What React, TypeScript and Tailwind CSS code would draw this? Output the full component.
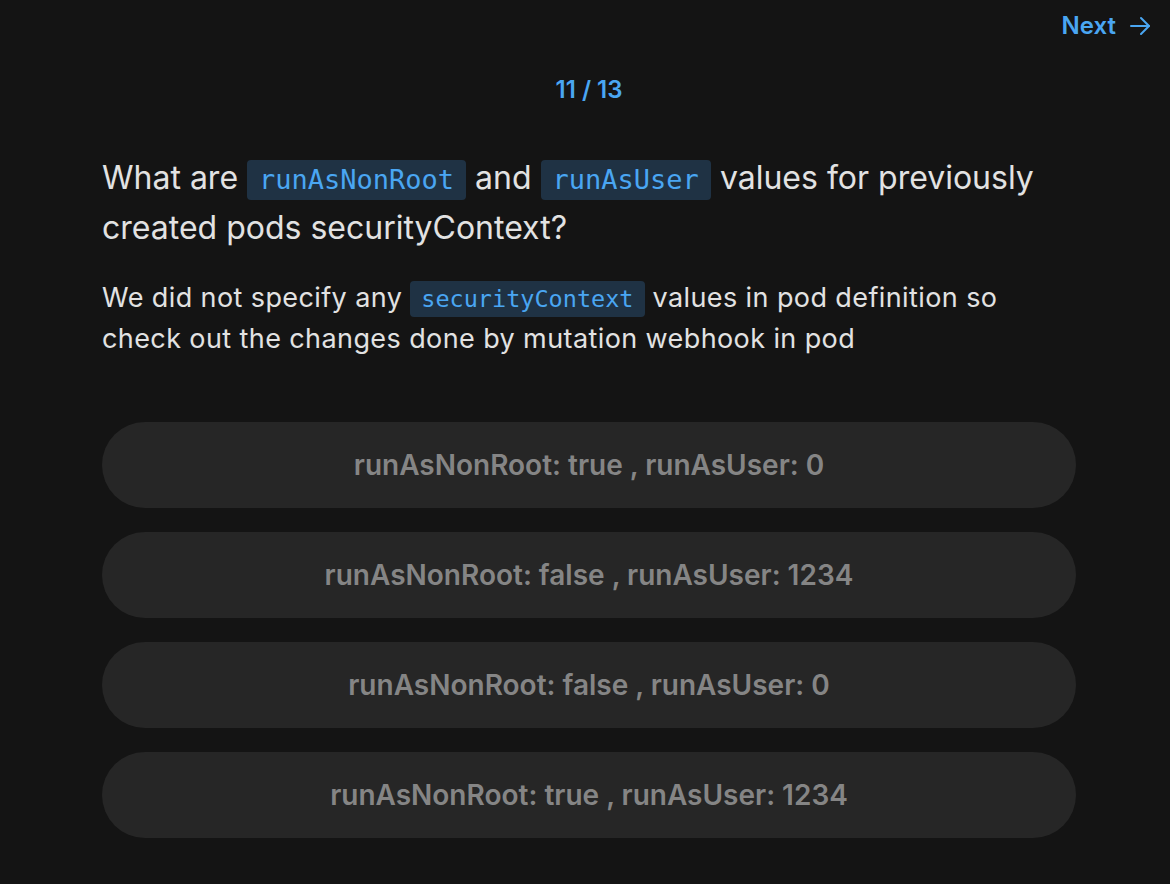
import React from "react";

const Code = ({ children, size }: { children: React.ReactNode; size: "lg" | "md" }) => (
  <code
    className={
      size === "lg"
        ? "inline-block rounded-[4px] bg-[#1f3244] px-[12px] leading-[40px] text-[27px] tracking-normal text-[#4aa6f2] align-baseline"
        : "inline-block rounded-[4px] bg-[#1f3244] px-[11px] leading-[36px] text-[23.5px] tracking-normal text-[#4aa6f2] align-baseline"
    }
    style={{ fontFamily: '"DejaVu Sans Mono", monospace' }}
  >
    {children}
  </code>
);

const options = [
  "runAsNonRoot: true , runAsUser: 0",
  "runAsNonRoot: false , runAsUser: 1234",
  "runAsNonRoot: false , runAsUser: 0",
  "runAsNonRoot: true , runAsUser: 1234",
];

export default function App() {
  return (
    <div
      className="min-h-[884px] w-full bg-[#141414] text-[#e2e2e2]"
      style={{ fontFamily: 'Inter, "Noto Sans", sans-serif' }}
    >
      <div className="flex justify-end pr-[18px] pt-[12px]">
        <button className="flex items-center gap-[12px] text-[24px] font-semibold text-[#4aa6f2] leading-[28px]">
          <span>Next</span>
          <svg width="24" height="24" viewBox="0 0 24 24" fill="none" stroke="currentColor" strokeWidth="2" strokeLinecap="round" strokeLinejoin="round">
            <path d="M3 12h18" />
            <path d="M13 4l8 8-8 8" />
          </svg>
        </button>
      </div>
      <div className="ml-[102px] w-[974px]">
        <div className="mt-[36px] text-center text-[24px] font-semibold text-[#4aa6f2] leading-[28px]">11 / 13</div>
        <h1 className="mt-[49px] text-[32px] leading-[50px] font-normal">
          What are <Code size="lg">runAsNonRoot</Code> and <Code size="lg">runAsUser</Code> values for previously created pods securityContext?
        </h1>
        <p className="mt-[24px] text-[27px] leading-[41px] tracking-[0.4px]">
          We did not specify any <Code size="md">securityContext</Code> values in pod definition so check out the changes done by mutation webhook in pod
        </p>
        <div className="mt-[63px] flex flex-col gap-[24px]">
          {options.map((o) => (
            <button
              key={o}
              className="h-[86px] w-full rounded-full bg-[#262626] text-[28px] font-semibold text-[#858585]"
            >
              {o}
            </button>
          ))}
        </div>
      </div>
    </div>
  );
}
